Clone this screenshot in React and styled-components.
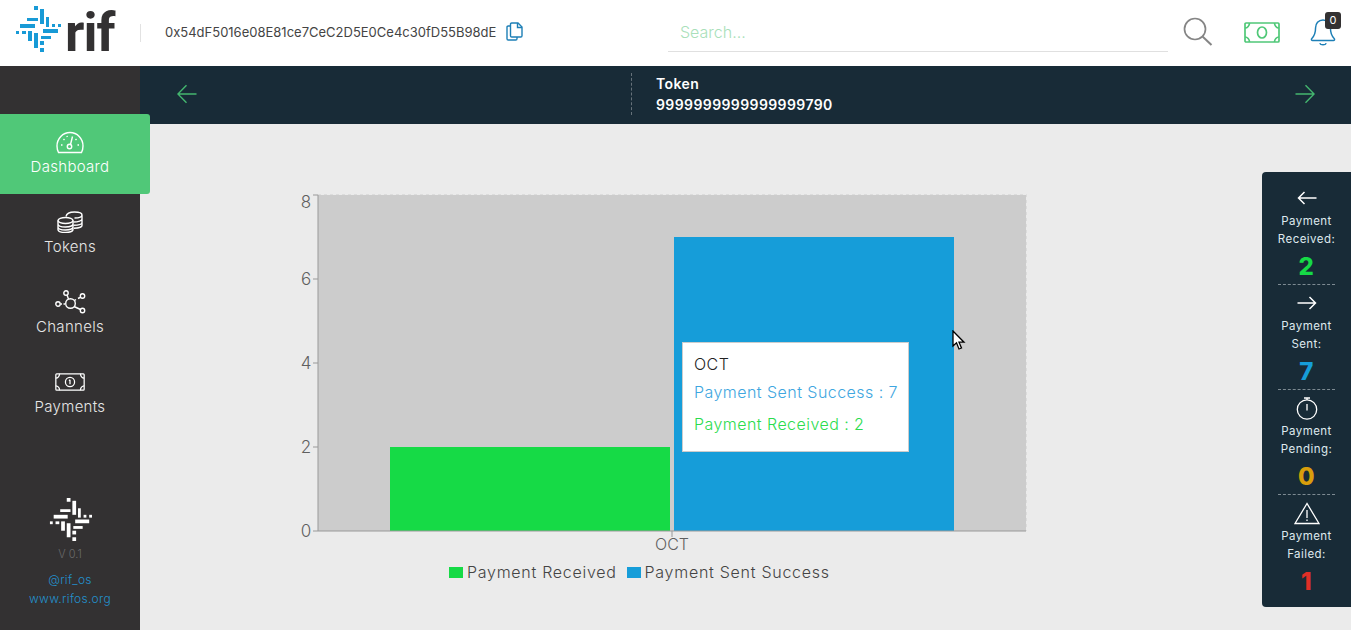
import styled, { createGlobalStyle } from "styled-components";

const GlobalStyle = createGlobalStyle`
  * { box-sizing: border-box; }
  html, body { margin: 0; padding: 0; height: 100%; overflow: hidden; }
  body { font-family: Inter, "Noto Sans", sans-serif; background: #ebebeb; }
`;

const MARK = [
  [34, 6, 4, 4], [27, 18, 11, 3], [20, 24, 15, 4], [16, 31, 3, 3], [22, 31, 4, 3],
  [40, 9, 4, 15], [46, 17, 3, 10], [52, 24, 3, 3], [58, 24, 3, 3], [43, 29, 15, 4],
  [41, 36, 10, 3], [28, 31, 4, 10], [34, 33, 4, 15], [40, 41, 4, 4], [40, 48, 4, 4],
];

const Mark = ({ color, size }) => (
  <svg width={size} height={size} viewBox="15 6 46 46">
    {MARK.map(([x, y, w, h]) => (
      <rect key={x + "-" + y} x={x} y={y} width={w} height={h} fill={color} />
    ))}
  </svg>
);

const Arrow = ({ color, dir, size = 20 }) => (
  <svg width={size} height={size} viewBox="0 0 20 20" fill="none" stroke={color} strokeWidth="1.4">
    {dir === "left" ? <path d="M19.5 10H1M9.5 1.2L.9 10l8.6 8.8" /> : <path d="M.5 10H19M10.5 1.2l8.6 8.8-8.6 8.8" />}
  </svg>
);

const SmallArrow = ({ dir }) => (
  <svg width="20" height="14" viewBox="0 0 20 14" fill="none" stroke="#fff" strokeWidth="1.5">
    {dir === "left" ? <path d="M19.500 7H1.500M7.500 1L1.500 7l6 6" /> : <path d="M.5 7h18M12.500 1l6 6-6 6" />}
  </svg>
);

const Gauge = () => (
  <svg width="28" height="23" viewBox="0 0 28 23" fill="none" stroke="#fff" strokeWidth="1.4">
    <path d="M2.5 21.5C1.4 19.5 1 17.500 1 15 1 7.500 6.800 1.500 14 1.500S27 7.500 27 15c0 2.500-.4 4.500-1.500 6.500z" />
    <circle cx="13.500" cy="15.500" r="2.200" />
    <path d="M14.500 13.500L16.500 5.500M5 14h1.500M21.500 14H23M7.500 8l1 1M20.500 8l-1 1M11 4.800l.3 1.200" />
  </svg>
);

const Coins = () => (
  <svg width="26" height="22" viewBox="0 0 26 22" fill="none" stroke="#fff" strokeWidth="1.4">
    <ellipse cx="8.500" cy="9.500" rx="7.500" ry="3" />
    <path d="M1 9.500v9c0 1.700 3.400 3 7.500 3s7.500-1.300 7.500-3v-9M1 13c0 1.700 3.400 3 7.500 3s7.500-1.300 7.500-3M1 16c0 1.700 3.400 3 7.500 3s7.500-1.300 7.500-3" />
    <path d="M9 5.500C9.500 3 12.500 1 17.500 1c4.200 0 7.500 1.300 7.500 3s-3.300 3-7.500 3M25 4v10.500c0 1.400-3.500 2.700-8 2.800M25 8c0 1.500-3.500 3-8.500 3M25 11.500c0 1.500-3.500 2.700-8.500 2.700" />
  </svg>
);

const Network = () => (
  <svg width="31" height="24" viewBox="0 0 31 24" fill="none" stroke="#fff" strokeWidth="1.4">
    <circle cx="15.500" cy="13.500" r="4.800" />
    <circle cx="11" cy="3" r="2.200" />
    <circle cx="27.500" cy="6" r="2.200" />
    <circle cx="27.500" cy="20.500" r="2.200" />
    <circle cx="3" cy="14" r="2.200" />
    <path d="M12 5l1.500 4M19 16.500l6.500 3M19.500 10.500l1.500-1M23 8.500l2-1M5.500 14H7M8.500 14H10" />
  </svg>
);

const Cash = ({ color, width, height, stroke, symbol }) => (
  <svg width={width} height={height} viewBox="0 0 36 21" preserveAspectRatio="none" fill="none" stroke={color} strokeWidth={stroke}>
    <rect x="1" y="1" width="34" height="19" rx="1" />
    <path d="M1 6C3.500 6 5.500 3.500 5.500 1M30.500 1c0 2.500 2 5 4.500 5M1 15c2.500 0 4.500 2.500 4.500 5M30.500 20c0-2.500 2-5 4.500-5" />
    {symbol ? (
      <>
        <circle cx="18" cy="10.500" r="5.500" />
        <path d="M18 8v5M16.800 9l1.200-1" />
      </>
    ) : (
      <ellipse cx="18" cy="10.500" rx="4.500" ry="5.500" />
    )}
  </svg>
);

const Copy = () => (
  <svg width="17" height="19" viewBox="0 0 17 19" fill="none" stroke="#1d7fb6" strokeWidth="1.4">
    <path d="M4.500 4H2.200C1.500 4 1 4.500 1 5.200v11.600c0 .7.500 1.200 1.200 1.200h7.600c.7 0 1.200-.5 1.200-1.200V15" />
    <path d="M6 1h6l4 4v8.800c0 .7-.5 1.200-1.200 1.200H5.700c-.7 0-1.200-.5-1.200-1.200V2.200C4.500 1.500 5 1 5.700 1z" />
    <path d="M11.500 1v4.500H16" />
  </svg>
);

const SearchIcon = () => (
  <svg width="30" height="30" viewBox="0 0 30 30" fill="none" stroke="#858585" strokeWidth="1.700">
    <circle cx="12" cy="12" r="10.500" />
    <path d="M19.500 19.500L28.500 28" strokeWidth="2" />
  </svg>
);

const BellIcon = () => (
  <svg width="26" height="29" viewBox="0 0 28 30" fill="none" stroke="#1d7fb6" strokeWidth="1.600">
    <path d="M14 1.500c-5 0-8 4-8 8.500 0 6-1.500 9-4 11.500-1 1-.3 2 .8 2h22.400c1.100 0 1.800-1 .8-2-2.500-2.500-4-5.500-4-11.500 0-4.500-3-8.500-8-8.500z" />
    <path d="M10.500 26.500c1 2.400 6 2.400 7 0" />
  </svg>
);

const Timer = () => (
  <svg width="22" height="23" viewBox="0 0 22 23" fill="none" stroke="#fff" strokeWidth="1.300">
    <circle cx="11" cy="12.500" r="9.700" />
    <path d="M11 7v6.500M8 1h6M11 1v2" />
  </svg>
);

const Warning = () => (
  <svg width="26" height="23" viewBox="0 0 26 23" fill="none" stroke="#fff" strokeWidth="1.300">
    <path d="M13 1.500L1 21.500h24z" />
    <path d="M13 8v8M13 17.500v1.500" />
  </svg>
);

const Page = styled.div`
  display: flex;
  flex-direction: column;
  height: 630px;
`;

const Header = styled.header`
  display: flex;
  align-items: center;
  height: 66px;
  background: #fff;
`;

const LogoBlock = styled.div`
  display: flex;
  align-items: flex-start;
  width: 140px;
  height: 66px;
  padding: 6px 0 0 15px;
`;

const LogoText = styled.span`
  margin: -3px 0 0 4px;
  font-family: Roboto, sans-serif;
  font-size: 53px;
  line-height: 60px;
  font-weight: 700;
  letter-spacing: -1px;
  color: #333132;
`;

const Divider = styled.span`
  width: 1px;
  height: 18px;
  background: #e2e2e2;
`;

const AddressGroup = styled.div`
  display: flex;
  align-items: center;
  gap: 10px;
  width: 527px;
  padding-left: 24px;
  margin-top: -3px;
`;

const Address = styled.span`
  font-size: 13px;
  color: #444;
  white-space: nowrap;
`;

const SearchBox = styled.div`
  width: 500px;
  height: 38px;
  padding: 0 12px;
  line-height: 36px;
  border-bottom: 1px solid #e0e0e0;
  font-size: 16px;
  font-weight: 300;
  color: #a9dfba;
`;

const HeaderIcons = styled.div`
  display: flex;
  align-items: center;
  padding: 0 0 0 15px;
  margin-top: -2px;
`;

const MoneyWrap = styled.div`
  display: flex;
  margin-left: 31px;
`;

const BellWrap = styled.div`
  position: relative;
  display: flex;
  margin-left: 30px;
`;

const Badge = styled.span`
  position: absolute;
  top: -6px;
  right: -5px;
  width: 16px;
  height: 17px;
  border-radius: 3px;
  background: #333132;
  color: #fff;
  font-size: 11px;
  line-height: 17px;
  text-align: center;
`;

const Body = styled.div`
  display: flex;
  flex: 1;
  min-height: 0;
`;

const Sidebar = styled.aside`
  position: relative;
  z-index: 2;
  display: flex;
  flex-direction: column;
  width: 140px;
  padding-top: 48px;
  background: #333132;
`;

const NavItem = styled.div`
  display: flex;
  flex-direction: column;
  align-items: center;
  justify-content: flex-end;
  gap: ${(p) => p.$gap}px;
  height: 80px;
  padding-bottom: 17px;
  width: ${(p) => (p.$active ? "150px" : "140px")};
  padding-right: ${(p) => (p.$active ? "10px" : "0")};
  background: ${(p) => (p.$active ? "#50c878" : "transparent")};
  border-radius: ${(p) => (p.$active ? "0 3px 3px 0" : "0")};
  color: ${(p) => (p.$active ? "#fff" : "#e6e6e6")};
  font-size: 15px;
  font-weight: 300;
  line-height: 20px;
  letter-spacing: 0.3px;
`;

const SidebarFoot = styled.div`
  display: flex;
  flex-direction: column;
  align-items: center;
  margin-top: auto;
  padding-bottom: 22px;
`;

const Version = styled.span`
  margin-top: 5px;
  font-size: 11px;
  font-weight: 300;
  line-height: 16px;
  color: #6a6a6a;
`;

const FootLink = styled.a`
  font-size: 12px;
  font-weight: 300;
  line-height: 19px;
  letter-spacing: 0.3px;
  color: #2390cc;
`;

const FootLinks = styled.div`
  display: flex;
  flex-direction: column;
  align-items: center;
  margin-top: 8px;
`;

const Content = styled.main`
  display: flex;
  flex-direction: column;
  flex: 1;
  min-width: 0;
`;

const TopBar = styled.div`
  display: flex;
  align-items: center;
  justify-content: space-between;
  height: 58px;
  padding: 0 36px 3px 37px;
  background: #182b37;
`;

const TokenBlock = styled.div`
  height: 42px;
  padding-left: 24px;
  border-left: 1px dashed #66727a;
  color: #fff;
  font-size: 14px;
  font-weight: 600;
  line-height: 21px;
  letter-spacing: 0.4px;
`;

const TopBarLeft = styled.div`
  display: flex;
  align-items: center;
  gap: 434px;
`;

const Stage = styled.div`
  display: flex;
  flex: 1;
  min-height: 0;
`;

const ChartArea = styled.div`
  position: relative;
  flex: 1;
  padding: 60px 0 0 140px;
`;

const ChartSvg = styled.svg`
  display: block;
  font-family: Inter, sans-serif;
  font-size: 17px;
  font-weight: 300;
  fill: #5f5f5f;
`;

const Legend = styled.div`
  display: flex;
  align-items: center;
  margin: 8px 0 0 169px;
  font-size: 16px;
  font-weight: 300;
  letter-spacing: 0.72px;
  color: #444;
`;

const LegendItem = styled.span`
  display: flex;
  align-items: center;
  gap: 4px;
  margin-right: 10px;
  &::before {
    content: "";
    width: 14px;
    height: 11px;
    background: ${(p) => p.$color};
  }
`;

const Tooltip = styled.div`
  position: absolute;
  left: 542px;
  top: 218px;
  width: 227px;
  height: 110px;
  padding: 11px;
  background: #fff;
  border: 1px solid #ccc;
  font-size: 16px;
  font-weight: 300;
  letter-spacing: 0.45px;
  white-space: nowrap;
`;

const TooltipTitle = styled.div`
  line-height: 20px;
  color: #222;
`;

const TooltipRow = styled.div`
  margin-top: ${(p) => p.$gap}px;
  line-height: 20px;
  color: ${(p) => p.$color};
`;

const Pointer = styled.svg`
  position: absolute;
  left: 812px;
  top: 206px;
`;

const StatsPanel = styled.aside`
  display: flex;
  flex-direction: column;
  align-self: flex-start;
  width: 89px;
  height: 435px;
  margin-top: 48px;
  padding: 7px 0 8px;
  background: #182b37;
  border-radius: 4px 0 0 4px;
`;

const Stat = styled.div`
  display: flex;
  flex-direction: column;
  align-items: center;
  justify-content: flex-end;
  position: relative;
  height: 105px;
  padding-bottom: 2px;
  color: #dfe9ee;
  font-size: 11.500px;
  line-height: 18px;
  letter-spacing: 0.45px;
  text-align: center;
  &:not(:last-child)::after {
    content: "";
    position: absolute;
    left: 16px;
    right: 16px;
    bottom: -1px;
    border-bottom: 1px dashed #7d8a92;
  }
`;

const StatIcon = styled.div`
  display: flex;
  height: 24px;
  align-items: center;
  margin-bottom: 2px;
`;

const StatValue = styled.div`
  margin-top: 4px;
  font-size: 24px;
  line-height: 30px;
  font-weight: 800;
  color: ${(p) => p.$color};
`;

const NAV = [
  { label: "Dashboard", icon: <Gauge />, active: true, gap: 3 },
  { label: "Tokens", icon: <Coins />, gap: 4 },
  { label: "Channels", icon: <Network />, gap: 3 },
  { label: "Payments", icon: <Cash color="#fff" width={30} height={18} stroke={1.500} symbol />, gap: 6 },
];

const STATS = [
  { label: "Received:", value: 2, color: "#16da46", icon: <SmallArrow dir="left" /> },
  { label: "Sent:", value: 7, color: "#169dd9", icon: <SmallArrow dir="right" /> },
  { label: "Pending:", value: 0, color: "#d99e0b", icon: <Timer /> },
  { label: "Failed:", value: 1, color: "#e02f27", icon: <Warning /> },
];

const Y_TICKS = [
  { label: 8, y: 1, base: 14 },
  { label: 6, y: 85, base: 91 },
  { label: 4, y: 169, base: 175 },
  { label: 2, y: 253, base: 259 },
  { label: 0, y: 337, base: 343 },
];

const App = () => (
  <Page>
    <GlobalStyle />
    <Header>
      <LogoBlock>
        <Mark color="#189ad6" size={46} />
        <LogoText>rif</LogoText>
      </LogoBlock>
      <Divider />
      <AddressGroup>
        <Address>0x54dF5016e08E81ce7CeC2D5E0Ce4c30fD55B98dE</Address>
        <Copy />
      </AddressGroup>
      <SearchBox>Search...</SearchBox>
      <HeaderIcons>
        <SearchIcon />
        <MoneyWrap>
          <Cash color="#50c878" width={36} height={21} stroke={1.700} />
        </MoneyWrap>
        <BellWrap>
          <BellIcon />
          <Badge>0</Badge>
        </BellWrap>
      </HeaderIcons>
    </Header>
    <Body>
      <Sidebar>
        {NAV.map((item) => (
          <NavItem key={item.label} $active={item.active} $gap={item.gap}>
            {item.icon}
            {item.label}
          </NavItem>
        ))}
        <SidebarFoot>
          <Mark color="#fff" size={43} />
          <Version>V 0.1</Version>
          <FootLinks>
            <FootLink>@rif_os</FootLink>
            <FootLink>www.rifos.org</FootLink>
          </FootLinks>
        </SidebarFoot>
      </Sidebar>
      <Content>
        <TopBar>
          <TopBarLeft>
            <Arrow color="#44b76f" dir="left" />
            <TokenBlock>
              <div>Token</div>
              <div>9999999999999999790</div>
            </TokenBlock>
          </TopBarLeft>
          <Arrow color="#44b76f" dir="right" />
        </TopBar>
        <Stage>
          <ChartArea>
            <ChartSvg width="760" height="370" viewBox="0 -10 760 370">
              <rect x="38" y="1" width="708" height="336" fill="#ccc" />
              <path d="M38 .5H746.500V337" fill="none" stroke="#dcdcdc" strokeDasharray="3 3" />
              <rect x="110" y="253" width="280" height="84" fill="#16da46" />
              <rect x="394" y="43" width="280" height="294" fill="#169dd9" />
              <path d="M38 1V337H746M392 337V343" fill="none" stroke="#999" />
              {Y_TICKS.map((t) => (
                <g key={t.label}>
                  <path d={`M33 ${t.y}H38`} stroke="#999" />
                  <text x="26" y={t.base} textAnchor="middle">{t.label}</text>
                </g>
              ))}
              <text x="392" y="356" textAnchor="middle" fontSize="16">OCT</text>
            </ChartSvg>
            <Legend>
              <LegendItem $color="#16da46">Payment Received</LegendItem>
              <LegendItem $color="#169dd9">Payment Sent Success</LegendItem>
            </Legend>
            <Tooltip>
              <TooltipTitle>OCT</TooltipTitle>
              <TooltipRow $color="#3ea6e0" $gap={8}>Payment Sent Success : 7</TooltipRow>
              <TooltipRow $color="#2bdc4e" $gap={12}>Payment Received : 2</TooltipRow>
            </Tooltip>
            <Pointer width="14" height="21" viewBox="0 0 14 21">
              <path d="M1 1v15l3.500-3.200L7 19l2.500-1-2.500-5.800h5z" fill="#fff" stroke="#000" strokeWidth="1.300" />
            </Pointer>
          </ChartArea>
          <StatsPanel>
            {STATS.map((s) => (
              <Stat key={s.label}>
                <StatIcon>{s.icon}</StatIcon>
                <div>Payment</div>
                <div>{s.label}</div>
                <StatValue $color={s.color}>{s.value}</StatValue>
              </Stat>
            ))}
          </StatsPanel>
        </Stage>
      </Content>
    </Body>
  </Page>
);

export default App;
